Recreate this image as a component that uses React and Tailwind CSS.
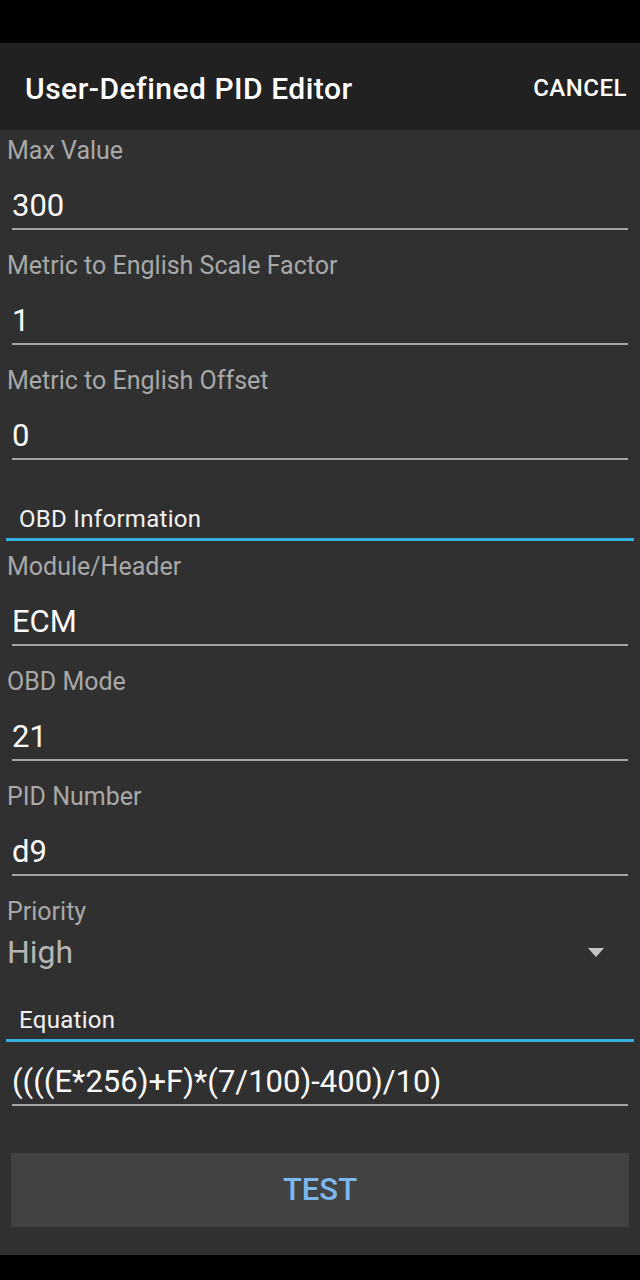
function Field({ label, value }) {
  return (
    <div className="mb-[16px]">
      <div className="px-[7px] text-[25px] leading-[40px] text-[#a8a8a8]">{label}</div>
      <div className="mx-[12px] border-b-2 border-[#a3a3a3] pt-[15px] pb-[2px] text-[31px] leading-[40px] text-[#fafafa]">
        {value}
      </div>
    </div>
  );
}

function Section({ title, pt }) {
  return (
    <div className={`mx-[6px] ${pt} border-b-[3px] border-[#33b0df] pb-[4px]`}>
      <div className="pl-[13px] text-[24px] leading-[30px] tracking-[0.3px] text-[#f2f2f2]">{title}</div>
    </div>
  );
}

export default function App() {
  return (
    <div className="flex h-[1280px] w-[640px] flex-col bg-black font-[Roboto,'Noto_Sans',sans-serif]">
      {/* status bar */}
      <div className="h-[43px] shrink-0 bg-black" />

      {/* toolbar */}
      <div className="flex h-[87px] shrink-0 items-center justify-between bg-[#212121] pt-[3px] pr-[13px] pl-[25px]">
        <h1 className="text-[30px] font-medium tracking-[0.5px] text-white">User-Defined PID Editor</h1>
        <button className="text-[24px] font-medium tracking-[0.5px] text-white">CANCEL</button>
      </div>

      {/* content */}
      <div className="flex-1 bg-[#303030] pt-[1px] pb-[28px]">
        <Field label="Max Value" value="300" />
        <Field label="Metric to English Scale Factor" value="1" />
        <div className="-mb-[16px]">
          <Field label="Metric to English Offset" value="0" />
        </div>

        <Section title="OBD Information" pt="pt-[44px]" />

        <div className="pt-[6px]">
          <Field label="Module/Header" value="ECM" />
          <Field label="OBD Mode" value="21" />
          <Field label="PID Number" value="d9" />

          {/* priority spinner */}
          <div>
            <div className="px-[7px] text-[25px] leading-[40px] text-[#a8a8a8]">Priority</div>
            <div className="flex items-center justify-between pr-[36px] pl-[7px]">
              <span className="text-[32px] leading-[40px] text-[#b4b4b4]">High</span>
              <svg width="16" height="9" viewBox="0 0 16 9">
                <polygon points="0,0 16,0 8,9" fill="#c4c4c4" />
              </svg>
            </div>
          </div>
        </div>

        <Section title="Equation" pt="pt-[33px]" />

        <div className="mx-[12px] border-b-2 border-[#a3a3a3] pt-[20px] pb-[2px] text-[31px] leading-[40px] text-[#fafafa]">
          ((((E*256)+F)*(7/100)-400)/10)
        </div>

        <button className="mx-[11px] mt-[47px] flex h-[74px] w-[618px] items-center justify-center bg-[#424242] text-[31px] font-medium text-[#7ab8ee]">
          TEST
        </button>
      </div>

      {/* nav bar */}
      <div className="h-[25px] shrink-0 bg-black" />
    </div>
  );
}
